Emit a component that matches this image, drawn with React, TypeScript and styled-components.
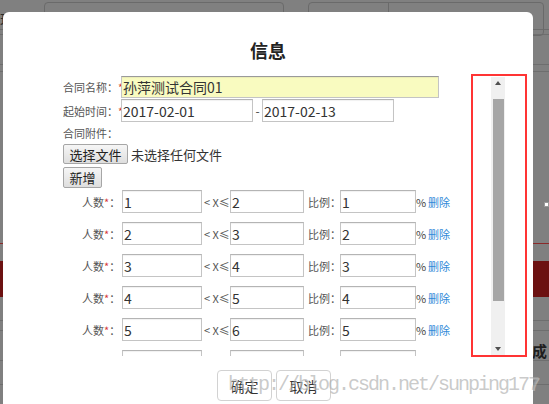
import React from "react";
import styled, { createGlobalStyle } from "styled-components";

const GlobalStyle = createGlobalStyle`
  html, body {
    margin: 0;
    padding: 0;
    width: 549px;
    height: 404px;
    overflow: hidden;
    background: #808080;
  }
  * {
    box-sizing: border-box;
  }
`;

const CN = `"Microsoft YaHei", "Noto Sans CJK SC", "Noto Sans", sans-serif`;

/* ---------- dimmed page behind the dialog ---------- */

const Page = styled.div`
  position: relative;
  width: 549px;
  height: 404px;
  background: #808080;
  overflow: hidden;
  font-family: ${CN};
`;

const Band = styled.div<{ $h: number; $line?: string; $bg?: string }>`
  height: ${(p) => p.$h}px;
  background: ${(p) => p.$bg || "transparent"};
  border-bottom: 1px solid ${(p) => p.$line || "transparent"};
  display: flex;
  align-items: flex-start;
`;

const TopBar = styled(Band)`
  padding-top: 2px;
`;

const DimLabel = styled.div`
  width: 44px;
  padding-top: 7px;
  font-size: 14px;
  color: #2c2c2c;
  white-space: nowrap;
  overflow: hidden;
`;

const Star = styled.span`
  color: #d63a3a;
`;

const DimBox = styled.div<{ $w: number }>`
  width: ${(p) => p.$w}px;
  height: 34px;
  border: 1px solid #6a6a6a;
  border-radius: 4px;
  display: flex;
  align-items: flex-start;
  padding-top: 5px;
  font-size: 14px;
  color: #3a3a3a;
  white-space: nowrap;
  overflow: hidden;
`;

const DimBoxLabel = styled.div`
  width: 80px;
  height: 34px;
  padding-left: 4px;
  border-right: 1px solid #6a6a6a;
  margin-top: -5px;
  padding-top: 5px;
  margin-right: 3px;
`;

const Handle = styled.div`
  width: 5px;
  height: 5px;
  margin: 130px 0 0 auto;
  background: #fff;
  border: 1px solid #999;
`;

const SideText = styled.div`
  padding: 9px 0 0 532px;
  font-family: "Noto Sans CJK SC", serif;
  font-weight: 700;
  font-size: 15px;
  color: #1e1e1e;
`;

/* ---------- dialog ---------- */

const Modal = styled.div`
  position: absolute;
  left: 3px;
  top: 12px;
  width: 530px;
  height: 420px;
  background: #fff;
  border-radius: 6px;
  display: flex;
  flex-direction: column;
  font-family: ${CN};
  color: #444;
`;

const Title = styled.div`
  padding-top: 27px;
  height: 49px;
  line-height: 22px;
  text-align: center;
  font-size: 18px;
  font-weight: 700;
  color: #222;
`;

const Body = styled.div`
  margin-top: 15px;
  height: 280px;
  display: flex;
  padding: 0 28px 0 60px;
`;

const Content = styled.div`
  flex: 1;
  overflow: hidden;
  display: flex;
  flex-direction: column;
`;

const Row = styled.div<{ $top?: number; $h?: number }>`
  display: flex;
  align-items: center;
  flex-shrink: 0;
  margin-top: ${(p) => p.$top || 0}px;
  height: ${(p) => p.$h || 23}px;
`;

const Label = styled.div`
  width: 58px;
  font-size: 11px;
  color: #555;
  white-space: nowrap;
`;

const Input = styled.input<{ $w: number; $yellow?: boolean }>`
  width: ${(p) => p.$w}px;
  height: 100%;
  margin: 0;
  padding: 0 1px;
  border: 1px solid #c4c4c4;
  border-top-color: ${(p) => (p.$yellow ? "#9a9a9a" : "#b4b4b4")};
  box-shadow: inset 0 1px 1px rgba(0, 0, 0, 0.06);
  background: ${(p) => (p.$yellow ? "#f9fbc0" : "#fff")};
  font-family: ${CN};
  font-size: 14px;
  color: #333;
  outline: none;
`;

const Dash = styled.span`
  width: 9px;
  text-align: center;
  font-size: 12px;
  color: #444;
`;

const GreyButton = styled.button<{ $w: number; $h: number }>`
  width: ${(p) => p.$w}px;
  height: ${(p) => p.$h}px;
  padding: 0;
  margin: 0;
  border: 1px solid #a6a6a6;
  border-radius: 2px;
  background: linear-gradient(#f6f6f6, #dedede);
  font-family: ${CN};
  font-size: 13px;
  color: #222;
`;

const FileHint = styled.span`
  margin-left: 3px;
  font-size: 13px;
  color: #333;
`;

const RangeRow = styled(Row)`
  padding-left: 19px;
  margin-bottom: 9px;
`;

const RangeLabel = styled.div<{ $w: number; $pad?: number }>`
  width: ${(p) => p.$w}px;
  padding-left: ${(p) => p.$pad || 0}px;
  font-size: 11px;
  color: #555;
  white-space: nowrap;
`;

const Percent = styled.span`
  width: 12px;
  font-size: 11px;
  color: #444;
`;

const DeleteLink = styled.a`
  font-size: 11px;
  color: #2f8ad8;
  text-decoration: none;
  cursor: pointer;
`;

/* fake scrollbar, drawn to match the old Chrome style */
const ScrollBar = styled.div`
  width: 14px;
  height: 278px;
  margin-top: 1px;
  background: #f0f0f0;
  display: flex;
  flex-direction: column;
  align-items: center;
`;

const Arrow = styled.div<{ $down?: boolean }>`
  height: 12px;
  display: flex;
  align-items: center;
  justify-content: center;
  &::after {
    content: "";
    border-left: 3.5px solid transparent;
    border-right: 3.5px solid transparent;
    ${(p) =>
      p.$down ? "border-top: 4px solid #505050;" : "border-bottom: 4px solid #505050;"}
  }
`;

const Thumb = styled.div`
  width: 11px;
  height: 202px;
  margin-top: 10px;
  background: #a6a6a6;
`;

const Footer = styled.div`
  margin-top: 14px;
  padding-left: 12px;
  display: flex;
  justify-content: center;
  gap: 4px;
`;

const FooterButton = styled.button`
  width: 55px;
  height: 31px;
  padding: 0;
  background: #fff;
  border: 1px solid #d2d2d2;
  border-radius: 4px;
  font-family: ${CN};
  font-size: 14px;
  color: #333;
`;

/* annotation and watermark lie over the screenshot */
const RedMark = styled.div`
  position: absolute;
  left: 471px;
  top: 74px;
  width: 56px;
  height: 283px;
  border: 2px solid #ff3434;
  pointer-events: none;
`;

const Watermark = styled.div`
  position: absolute;
  left: 228px;
  top: 374px;
  font-family: "Liberation Mono", monospace;
  font-size: 20px;
  line-height: 22px;
  letter-spacing: -2px;
  color: rgba(168, 168, 168, 0.62);
  text-shadow: 1px 1px 0 rgba(255, 255, 255, 0.35);
  white-space: nowrap;
  pointer-events: none;
`;

const ranges = [1, 2, 3, 4, 5, 6];

export default function App() {
  return (
    <>
      <GlobalStyle />
      <Page>
        <TopBar $h={30} $line="#6c6c6c">
          <DimLabel>
            理状态<Star>*</Star>
          </DimLabel>
          <DimBox $w={240}>&nbsp;&nbsp;计划</DimBox>
          <div style={{ width: 24 }} />
          <DimBox $w={236}>
            <DimBoxLabel>
              开发负责人<Star>*</Star>
            </DimBoxLabel>
            请选择开发负责人
          </DimBox>
        </TopBar>
        <Band $h={5} $line="#6e6e6e" />
        <Band $h={30} $line="#6e6e6e" />
        <Band $h={7} $line="#6e6e6e" />
        <Band $h={172} $line="#8a2a2a">
          <Handle />
        </Band>
        <Band $h={17} />
        <Band $h={36} $bg="#6c1111" />
        <Band $h={24} $line="#6e6e6e" />
        <Band $h={10} $line="#6e6e6e" />
        <Band $h={30} $line="#6e6e6e">
          <SideText>成</SideText>
        </Band>
        <Band $h={24} $line="#6e6e6e" />

        <Modal>
          <Title>信息</Title>
          <Body>
            <Content>
              <Row $h={22}>
                <Label>
                  合同名称：<Star>*</Star>
                </Label>
                <Input $w={318} $yellow readOnly defaultValue="孙萍测试合同01" />
              </Row>
              <Row $top={1}>
                <Label>
                  起始时间：<Star>*</Star>
                </Label>
                <Input $w={132} readOnly defaultValue="2017-02-01" />
                <Dash>-</Dash>
                <Input $w={132} readOnly defaultValue="2017-02-13" />
              </Row>
              <Row $top={1} $h={20}>
                <Label>合同附件：</Label>
              </Row>
              <Row $top={1} $h={20}>
                <GreyButton $w={65} $h={20}>选择文件</GreyButton>
                <FileHint>未选择任何文件</FileHint>
              </Row>
              <Row $top={3} $h={21}>
                <GreyButton $w={39} $h={21}>新增</GreyButton>
              </Row>
              <div style={{ height: 2, flexShrink: 0 }} />
              {ranges.map((n) => (
                <RangeRow key={n}>
                  <RangeLabel $w={40}>
                    人数<Star>*</Star>：
                  </RangeLabel>
                  <Input $w={80} readOnly defaultValue={String(n)} />
                  <RangeLabel $w={28} $pad={2}>
                    &lt; X≤
                  </RangeLabel>
                  <Input $w={74} readOnly defaultValue={String(n + 1)} />
                  <RangeLabel $w={36} $pad={4}>
                    比例：
                  </RangeLabel>
                  <Input $w={76} readOnly defaultValue={String(n)} />
                  <Percent>%</Percent>
                  <DeleteLink>删除</DeleteLink>
                </RangeRow>
              ))}
            </Content>
            <ScrollBar>
              <Arrow />
              <Thumb />
              <div style={{ flex: 1 }} />
              <Arrow $down />
            </ScrollBar>
          </Body>
          <Footer>
            <FooterButton>确定</FooterButton>
            <FooterButton>取消</FooterButton>
          </Footer>
        </Modal>

        <RedMark />
        <Watermark>http://blog.csdn.net/sunping177</Watermark>
      </Page>
    </>
  );
}
